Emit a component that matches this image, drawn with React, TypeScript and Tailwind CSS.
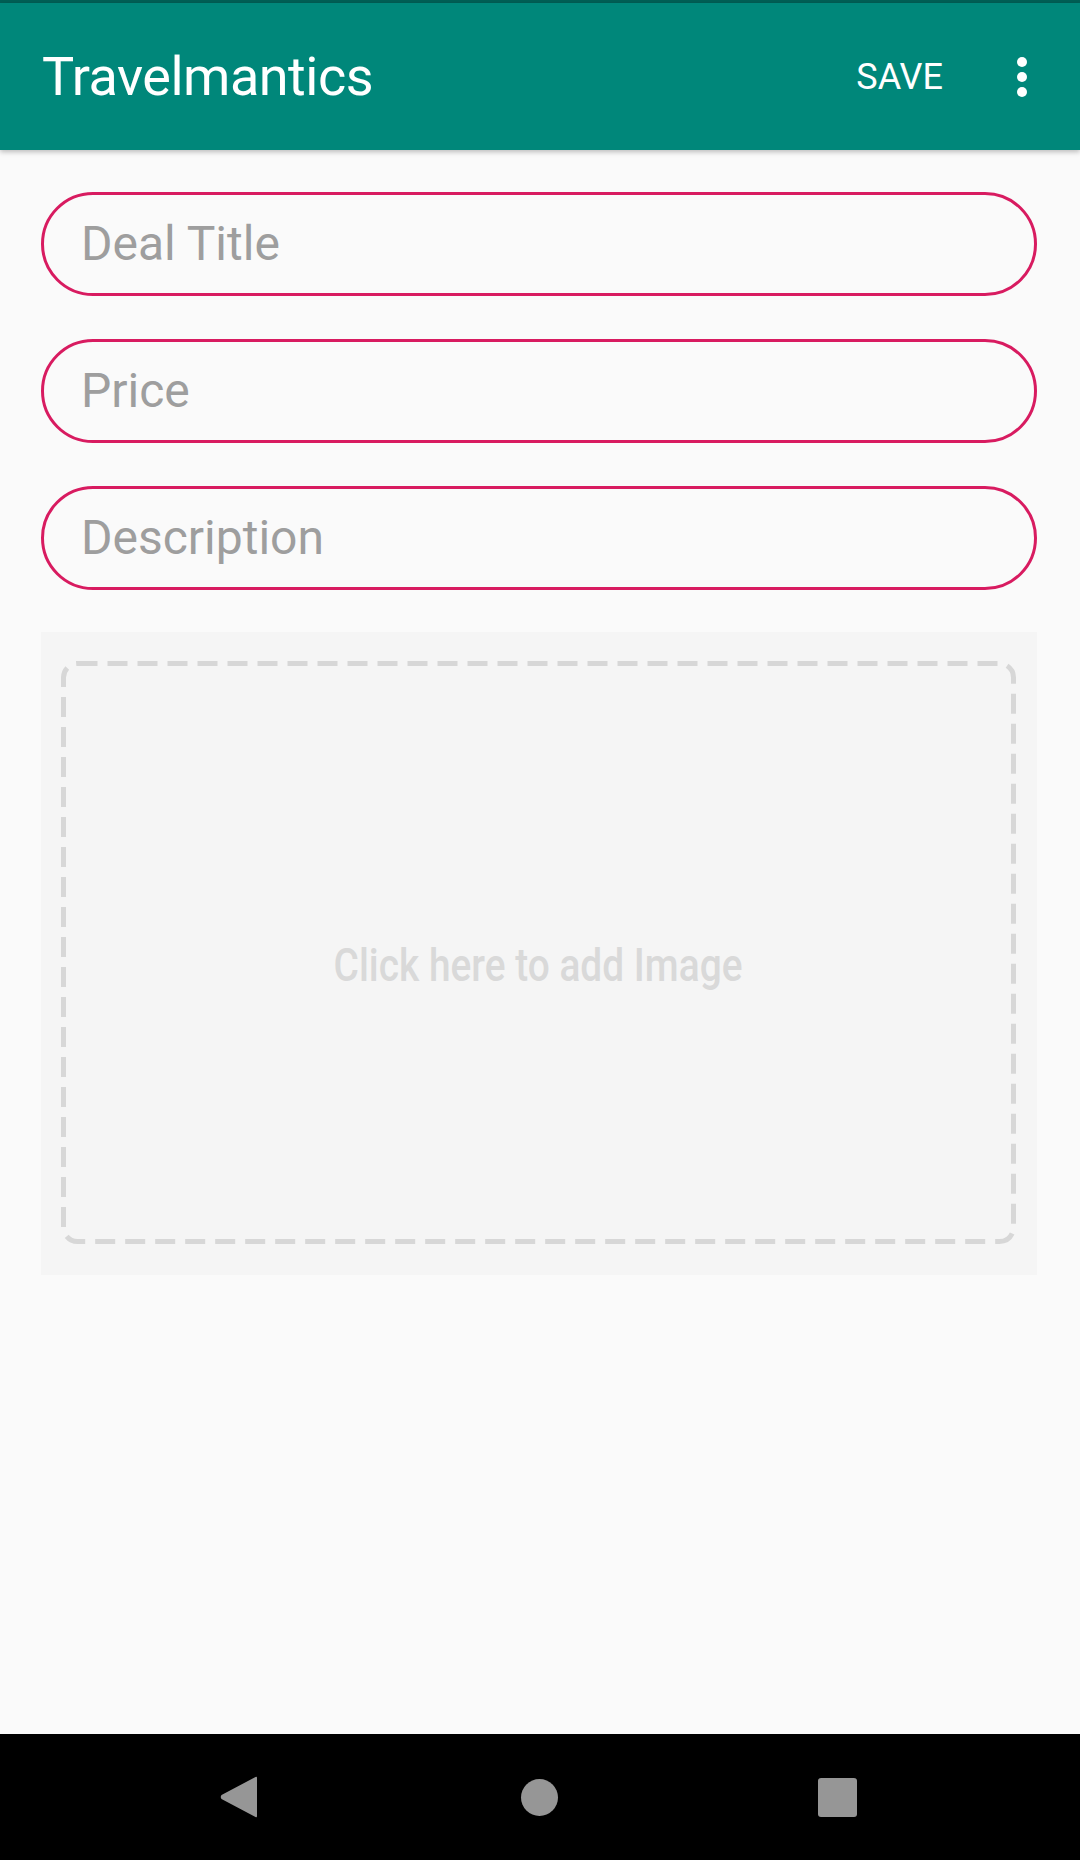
import React from "react";

const font = { fontFamily: "Roboto, 'Noto Sans', sans-serif" };

function Field({ label }: { label: string }) {
  return (
    <div className="h-[104px] w-full rounded-full border-[3px] border-[#d81b60] flex items-center pl-[37px]">
      <span className="text-[48px] leading-none text-[#9e9e9e]">{label}</span>
    </div>
  );
}

export default function App() {
  return (
    <div className="w-[1080px] h-[1860px] flex flex-col bg-[#fafafa] overflow-hidden" style={font}>
      <div className="h-[3px] bg-[#005f55]" />
      <header className="relative z-10 h-[147px] bg-[#00877a] flex items-center pl-[42px] pr-[53px] shadow-[0_2px_5px_rgba(0,0,0,0.25)]">
        <h1 className="text-[54px] leading-none text-white font-normal tracking-[-0.5px]">Travelmantics</h1>
        <div className="ml-auto flex items-center">
          <span className="text-[36px] leading-none text-white">SAVE</span>
          <div className="ml-[74px] flex flex-col items-center gap-[5px]">
            <span className="block w-[10px] h-[10px] rounded-full bg-white" />
            <span className="block w-[10px] h-[10px] rounded-full bg-white" />
            <span className="block w-[10px] h-[10px] rounded-full bg-white" />
          </div>
        </div>
      </header>
      <main className="flex-1 flex flex-col px-[41px] pt-[42px]">
        <div className="w-[996px] flex flex-col gap-[43px]">
          <Field label="Deal Title" />
          <Field label="Price" />
          <Field label="Description" />
        </div>
        <div className="mt-[42px] w-[996px] h-[643px] bg-[#f5f5f5] pl-[20px] pr-[21px] pt-[29px] pb-[31px]">
          <div className="relative w-full h-full flex items-center justify-center">
            <svg className="absolute inset-0" width="955" height="583" viewBox="0 0 955 583">
              <rect x="2.5" y="2.5" width="950" height="578" rx="14" ry="14" fill="none" stroke="#d7d7d7" strokeWidth="5" strokeDasharray="20 10" />
            </svg>
            <span className="relative mt-[24px] text-[46px] leading-none text-[#d9d9d9] font-medium inline-block scale-x-[0.845] whitespace-nowrap">Click here to add Image</span>
          </div>
        </div>
      </main>
      <nav className="h-[126px] bg-black flex items-center">
        <div className="w-full flex items-center">
          <svg className="ml-[220px]" width="38" height="42" viewBox="0 0 38 42">
            <path d="M37 2 Q37 0 35.5 1 L1.5 19 Q0 21 1.5 23 L35.5 41 Q37 42 37 40 Z" fill="#969696" />
          </svg>
          <div className="ml-[263px] w-[37px] h-[37px] rounded-full bg-[#969696]" />
          <div className="ml-[260px] w-[39px] h-[39px] rounded-[3px] bg-[#969696]" />
        </div>
      </nav>
    </div>
  );
}
